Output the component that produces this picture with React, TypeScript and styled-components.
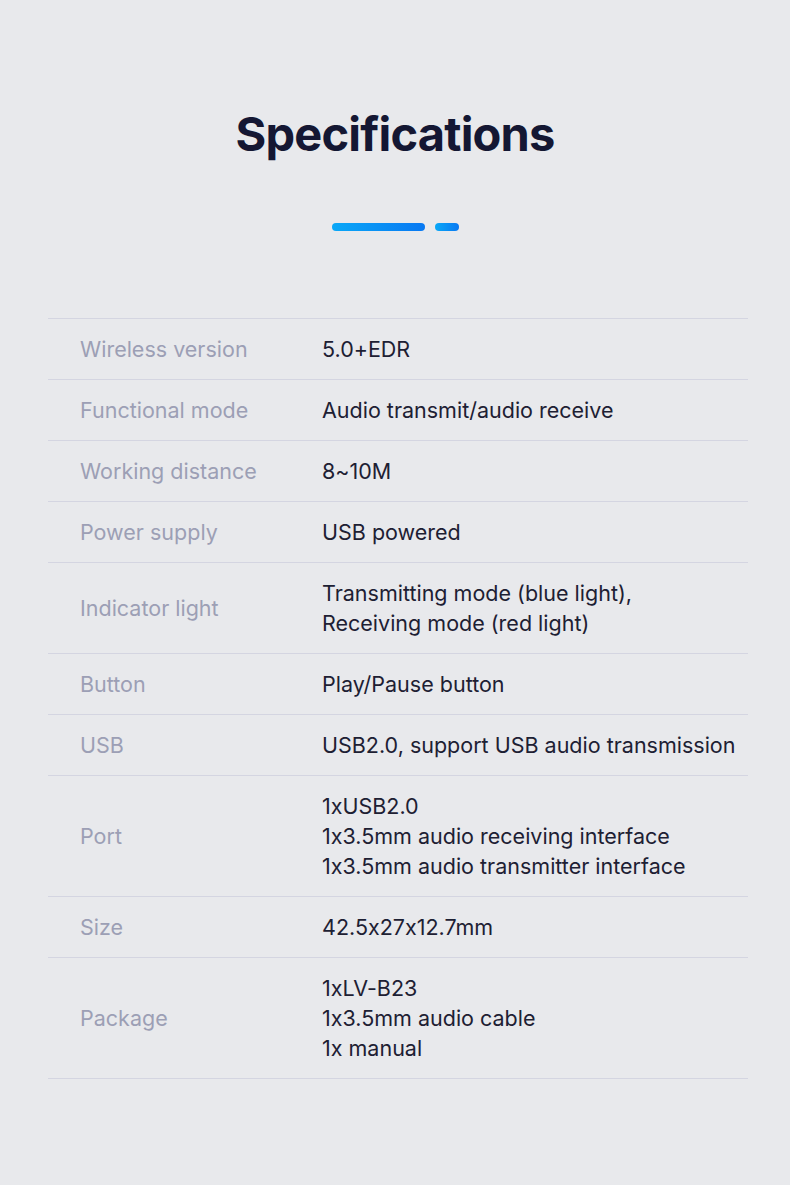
import React from "react";
import styled, { createGlobalStyle } from "styled-components";

const Global = createGlobalStyle`
  html, body { margin: 0; padding: 0; background: #e8e9ec; }
  body { font-family: Inter, "Noto Sans", sans-serif; font-feature-settings: "calt" 0; }
`;

const Page = styled.div`
  width: 790px;
  height: 1185px;
  background: #e8e9ec;
  display: flex;
  flex-direction: column;
  align-items: center;
  box-sizing: border-box;
  padding-top: 104px;
`;

const Title = styled.h1`
  margin: 0;
  font-family: Inter, sans-serif;
  font-weight: 700;
  font-size: 47px;
  line-height: 60px;
  color: #141733;
  letter-spacing: -0.8px;
`;

const Bars = styled.div`
  display: flex;
  gap: 10px;
  margin-top: 59px;
`;

const Bar = styled.div<{ $w: number }>`
  width: ${(p) => p.$w}px;
  height: 8px;
  border-radius: 4px;
  background: linear-gradient(90deg, #0aa8f7, #0878f2);
`;

const Table = styled.div`
  width: 700px;
  margin-top: 87px;
  margin-left: 6px;
  border-bottom: 1.5px solid #d4d5e1;
`;

const Row = styled.div`
  display: grid;
  grid-template-columns: 242px 1fr;
  align-items: center;
  padding: 15px 0 15px 32px;
  border-top: 1.5px solid #d4d5e1;
  font-size: 21.5px;
  line-height: 30px;
  font-feature-settings: "calt" 0;
`;

const Label = styled.div`
  color: #9c9fb5;
`;

const Value = styled.div`
  color: #1d2033;
  white-space: pre-line;
`;

const specs: [string, string][] = [
  ["Wireless version", "5.0+EDR"],
  ["Functional mode", "Audio transmit/audio receive"],
  ["Working distance", "8~10M"],
  ["Power supply", "USB powered"],
  ["Indicator light", "Transmitting mode (blue light),\nReceiving mode (red light)"],
  ["Button", "Play/Pause button"],
  ["USB", "USB2.0, support USB audio transmission"],
  ["Port", "1xUSB2.0\n1x3.5mm audio receiving interface\n1x3.5mm audio transmitter interface"],
  ["Size", "42.5x27x12.7mm"],
  ["Package", "1xLV-B23\n1x3.5mm audio cable\n1x manual"],
];

export default function App() {
  return (
    <>
      <Global />
      <Page>
        <Title>Specifications</Title>
        <Bars>
          <Bar $w={93} />
          <Bar $w={24} />
        </Bars>
        <Table>
          {specs.map(([l, v]) => (
            <Row key={l}>
              <Label>{l}</Label>
              <Value>{v}</Value>
            </Row>
          ))}
        </Table>
      </Page>
    </>
  );
}
